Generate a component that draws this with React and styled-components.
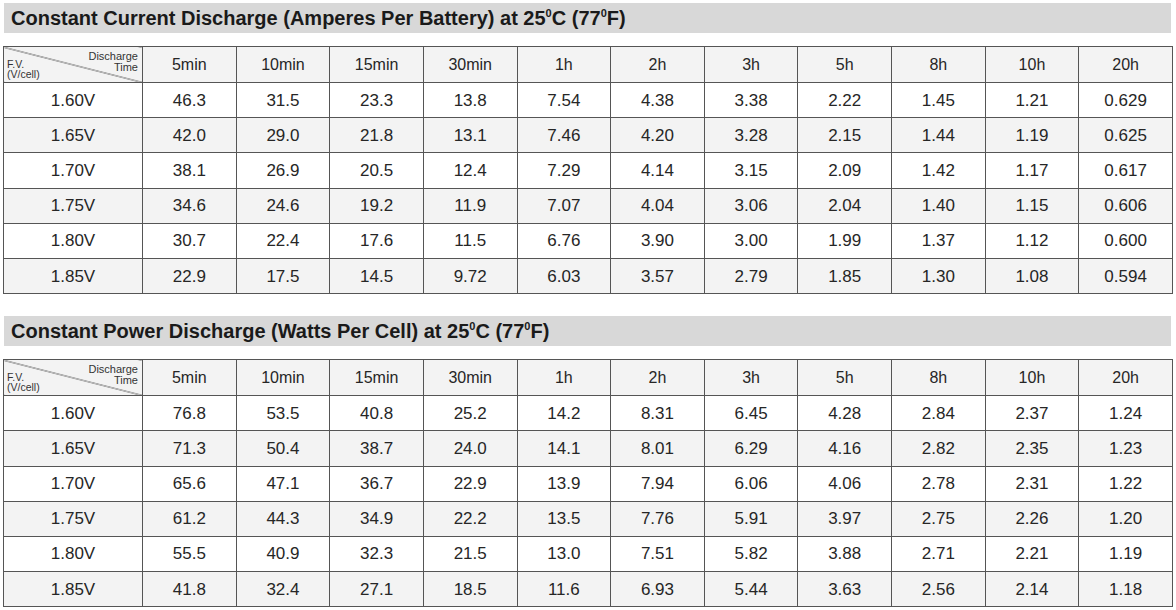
import React from "react";
import styled, { createGlobalStyle } from "styled-components";

const Global = createGlobalStyle`
  html, body { margin: 0; padding: 0; background: #ffffff; }
  body { font-family: "Liberation Sans", Arial, Helvetica, sans-serif; color: #222; }
`;

const Page = styled.div`
  width: 1176px;
  padding: 3px 3px 0 3px;
  box-sizing: border-box;
  display: flex;
  flex-direction: column;
  gap: 22px;
`;

const Section = styled.section`
  display: flex;
  flex-direction: column;
  gap: 13px;
`;

const TitleBar = styled.h2`
  margin: 0 2px 0 1px;
  height: 30px;
  background: #d8d8d8;
  display: flex;
  align-items: center;
  padding-left: 7px;
  font-size: 20px;
  font-weight: 700;
  color: #1a1a1a;
`;

const TitleText = styled.span`
  line-height: 1;
`;

const Sup = styled.sup`
  font-size: 11px;
  line-height: 1;
  vertical-align: super;
`;

const Table = styled.table`
  width: 1170px;
  border-collapse: collapse;
  table-layout: fixed;
  border: 1.5px solid #4a4a4a;
`;

const Row = styled.tr`
  background: ${(p) => (p.$shade ? "#f3f3f3" : "#ffffff")};
  height: ${(p) => (p.$head ? 36 : 35.2)}px;
`;

const Cell = styled.td`
  border: 1px solid #555;
  text-align: center;
  vertical-align: middle;
  padding: 0;
  font-size: ${(p) => (p.$head ? 16 : 17)}px;
  color: #262626;
  line-height: 1;
`;

const CornerCell = styled.td`
  border: 1px solid #555;
  padding: 0;
  background: linear-gradient(
    to top right,
    transparent calc(50% - 0.7px),
    #444 50%,
    transparent calc(50% + 0.7px)
  );
`;

const CornerInner = styled.div`
  height: 34px;
  box-sizing: border-box;
  display: flex;
  justify-content: space-between;
  padding: 3px 4px 3px 3px;
`;

const CornerLabel = styled.div`
  align-self: ${(p) => (p.$right ? "flex-start" : "flex-end")};
  text-align: ${(p) => (p.$right ? "right" : "left")};
  font-size: ${(p) => (p.$right ? 11 : 10.5)}px;
  line-height: ${(p) => (p.$right ? 11 : 10)}px;
  color: #333;
`;

const times = ["5min", "10min", "15min", "30min", "1h", "2h", "3h", "5h", "8h", "10h", "20h"];

const current = [
  ["1.60V", "46.3", "31.5", "23.3", "13.8", "7.54", "4.38", "3.38", "2.22", "1.45", "1.21", "0.629"],
  ["1.65V", "42.0", "29.0", "21.8", "13.1", "7.46", "4.20", "3.28", "2.15", "1.44", "1.19", "0.625"],
  ["1.70V", "38.1", "26.9", "20.5", "12.4", "7.29", "4.14", "3.15", "2.09", "1.42", "1.17", "0.617"],
  ["1.75V", "34.6", "24.6", "19.2", "11.9", "7.07", "4.04", "3.06", "2.04", "1.40", "1.15", "0.606"],
  ["1.80V", "30.7", "22.4", "17.6", "11.5", "6.76", "3.90", "3.00", "1.99", "1.37", "1.12", "0.600"],
  ["1.85V", "22.9", "17.5", "14.5", "9.72", "6.03", "3.57", "2.79", "1.85", "1.30", "1.08", "0.594"],
];

const power = [
  ["1.60V", "76.8", "53.5", "40.8", "25.2", "14.2", "8.31", "6.45", "4.28", "2.84", "2.37", "1.24"],
  ["1.65V", "71.3", "50.4", "38.7", "24.0", "14.1", "8.01", "6.29", "4.16", "2.82", "2.35", "1.23"],
  ["1.70V", "65.6", "47.1", "36.7", "22.9", "13.9", "7.94", "6.06", "4.06", "2.78", "2.31", "1.22"],
  ["1.75V", "61.2", "44.3", "34.9", "22.2", "13.5", "7.76", "5.91", "3.97", "2.75", "2.26", "1.20"],
  ["1.80V", "55.5", "40.9", "32.3", "21.5", "13.0", "7.51", "5.82", "3.88", "2.71", "2.21", "1.19"],
  ["1.85V", "41.8", "32.4", "27.1", "18.5", "11.6", "6.93", "5.44", "3.63", "2.56", "2.14", "1.18"],
];

function Corner() {
  return (
    <CornerCell>
      <CornerInner>
        <CornerLabel>
          F.V.
          <br />
          (V/cell)
        </CornerLabel>
        <CornerLabel $right>
          Discharge
          <br />
          Time
        </CornerLabel>
      </CornerInner>
    </CornerCell>
  );
}

function DataTable({ rows }) {
  return (
    <Table>
      <colgroup>
        <col style={{ width: 139 }} />
        {times.map((t) => (
          <col key={t} />
        ))}
      </colgroup>
      <tbody>
        <Row $head $shade>
          <Corner />
          {times.map((t) => (
            <Cell key={t} $head>
              {t}
            </Cell>
          ))}
        </Row>
        {rows.map((r, i) => (
          <Row key={r[0]} $shade={i % 2 === 1}>
            {r.map((v, j) => (
              <Cell key={j}>{v}</Cell>
            ))}
          </Row>
        ))}
      </tbody>
    </Table>
  );
}

export default function App() {
  return (
    <>
      <Global />
      <Page>
        <Section>
          <TitleBar>
            <TitleText>
              Constant Current Discharge (Amperes Per Battery) at 25<Sup>0</Sup>C (77<Sup>0</Sup>F)
            </TitleText>
          </TitleBar>
          <DataTable rows={current} />
        </Section>
        <Section>
          <TitleBar>
            <TitleText>
              Constant Power Discharge (Watts Per Cell) at 25<Sup>0</Sup>C (77<Sup>0</Sup>F)
            </TitleText>
          </TitleBar>
          <DataTable rows={power} />
        </Section>
      </Page>
    </>
  );
}
